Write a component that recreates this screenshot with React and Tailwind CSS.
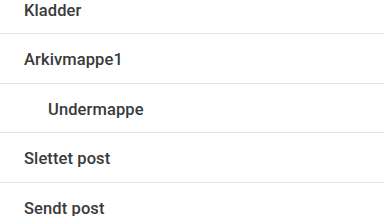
export default function App() {
  const rows = [
    { label: "Kladder", indent: false },
    { label: "Arkivmappe1", indent: false },
    { label: "Undermappe", indent: true },
    { label: "Slettet post", indent: false },
    { label: "Sendt post", indent: false },
  ];
  return (
    <div className="w-[384px] h-[216px] overflow-hidden bg-white" style={{ fontFamily: "Roboto, 'Noto Sans', sans-serif" }}>
      <div className="mt-[-15.5px] flex flex-col">
        {rows.map((r) => (
          <div
            key={r.label}
            className={`h-[49.5px] shrink-0 flex items-center border-b-[1.5px] border-[#e2e2e2] ${r.indent ? "pl-[48px]" : "pl-[24px]"}`}
          >
            <span className="text-[16.5px] font-medium text-[#3a3a3a] leading-none pt-[4px] tracking-[0.1px]">{r.label}</span>
          </div>
        ))}
      </div>
    </div>
  );
}
